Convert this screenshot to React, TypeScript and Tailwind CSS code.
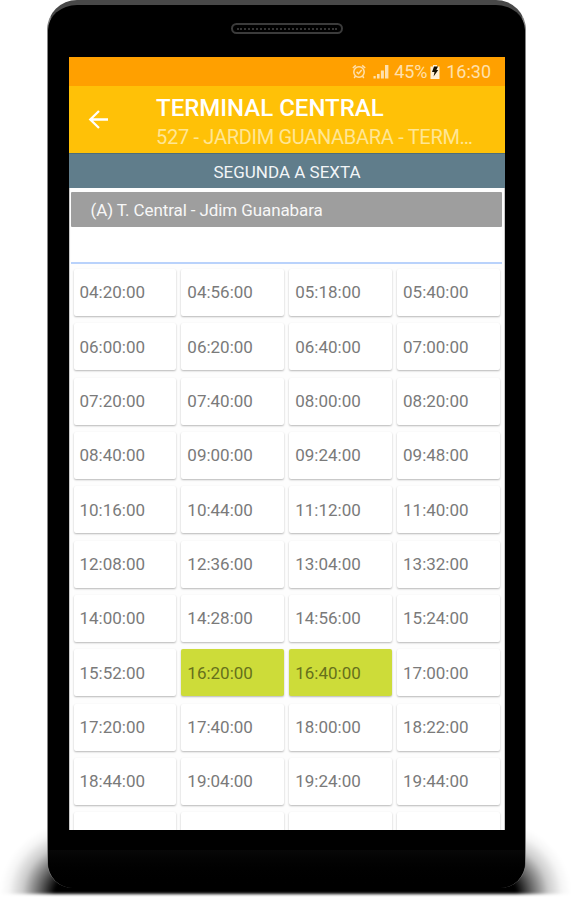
interface Departure {
  time: string;
  next?: boolean;
}

const departures: Departure[] = [
  { time: "04:20:00" },
  { time: "04:56:00" },
  { time: "05:18:00" },
  { time: "05:40:00" },
  { time: "06:00:00" },
  { time: "06:20:00" },
  { time: "06:40:00" },
  { time: "07:00:00" },
  { time: "07:20:00" },
  { time: "07:40:00" },
  { time: "08:00:00" },
  { time: "08:20:00" },
  { time: "08:40:00" },
  { time: "09:00:00" },
  { time: "09:24:00" },
  { time: "09:48:00" },
  { time: "10:16:00" },
  { time: "10:44:00" },
  { time: "11:12:00" },
  { time: "11:40:00" },
  { time: "12:08:00" },
  { time: "12:36:00" },
  { time: "13:04:00" },
  { time: "13:32:00" },
  { time: "14:00:00" },
  { time: "14:28:00" },
  { time: "14:56:00" },
  { time: "15:24:00" },
  { time: "15:52:00" },
  { time: "16:20:00", next: true },
  { time: "16:40:00", next: true },
  { time: "17:00:00" },
  { time: "17:20:00" },
  { time: "17:40:00" },
  { time: "18:00:00" },
  { time: "18:22:00" },
  { time: "18:44:00" },
  { time: "19:04:00" },
  { time: "19:24:00" },
  { time: "19:44:00" },
];

function AlarmIcon() {
  return (
    <svg
      viewBox="0 0 14 16"
      className="h-4 w-3.5"
      fill="none"
      stroke="currentColor"
      strokeWidth="1.5"
      aria-hidden="true"
    >
      <circle cx="7" cy="8" r="5.2" />
      <path d="M.8 4 3.8 1.4M13.2 4l-3-2.6M4.6 7.9l1.9 1.8 3.2-3.6M3.4 12.2 2.2 14M10.6 12.2l1.2 1.8" />
    </svg>
  );
}

function SignalIcon() {
  return (
    <svg viewBox="0 0 16 15" className="h-[15px] w-4" fill="currentColor" aria-hidden="true">
      <path d="M.5 12h2.2v2.5H.5zM4 10h2.6v4.5H4zM7.9 6.5h3v8h-3zM12 1h3.4v13.5H12z" />
    </svg>
  );
}

function BatteryIcon() {
  return (
    <svg viewBox="0 0 10 14" className="h-3.5 w-2.5" aria-hidden="true">
      <path d="M3 0h4v1.5h2.5V14H.5V1.5H3z" fill="#fff0d6" />
      <path d="M4 1.5h4L6.4 5H8.2L3.6 11.5 4.5 7H2z" fill="#171100" />
    </svg>
  );
}

function StatusBar() {
  return (
    <div className="flex h-[29px] shrink-0 items-center justify-end bg-[#ffa000] pr-3.5 text-[18px] text-[#ffe0ad]">
      <AlarmIcon />
      <span className="ml-[7px]">
        <SignalIcon />
      </span>
      <span className="ml-[5px] tracking-[-0.2px]">45%</span>
      <span className="ml-[3px]">
        <BatteryIcon />
      </span>
      <span className="ml-1.5">16:30</span>
    </div>
  );
}

function Toolbar() {
  return (
    <header className="flex h-[67px] shrink-0 bg-[#ffc107] pl-[19px]">
      <button aria-label="Voltar" className="mt-[23px] h-[21px] w-[21px] text-white">
        <svg
          viewBox="0 0 21 21"
          fill="none"
          stroke="currentColor"
          strokeWidth="2.3"
          aria-hidden="true"
        >
          <path d="M20 10.5H2.5M11 2 2.3 10.5 11 19" />
        </svg>
      </button>
      <div className="ml-[47px] pt-2 whitespace-nowrap">
        <h1 className="text-[24px] leading-[28px] font-medium text-white">TERMINAL CENTRAL</h1>
        <p className="text-[20px] leading-[30px] tracking-[-0.3px] text-[#ffe694]">
          527 - JARDIM GUANABARA - TERM…
        </p>
      </div>
    </header>
  );
}

function DepartureCard({ time, next }: Departure) {
  return (
    <div
      className={[
        "flex h-[47px] items-center rounded-[2px] pt-px pl-1.5 text-[17px] shadow-[0_1px_2px_rgba(0,0,0,0.28)]",
        next ? "bg-[#cddc39] text-[#66701c]" : "bg-white text-[#7a7a7a]",
      ].join(" ")}
    >
      {time}
    </div>
  );
}

function Screen() {
  return (
    <main className="ml-[21px] flex h-[773px] w-[436px] flex-col overflow-hidden bg-[#fdfdfd]">
      <StatusBar />
      <Toolbar />
      <div className="flex h-[35px] shrink-0 items-center justify-center border-t border-[#4d6d79] bg-[#607d8b] pt-1 text-[17px] text-[#f2f5f7]">
        SEGUNDA A SEXTA
      </div>
      <section className="flex-1 border-x border-[#c9c9c9] pt-1 pr-0.5 pl-px">
        <div className="flex h-[35px] items-center rounded-[1px] bg-[#9e9e9e] pt-0.5 pl-[19.5px] text-[17px] tracking-[-0.1px] text-[#f7f7f7]">
          (A) T. Central - Jdim Guanabara
        </div>
        <div className="h-[37px] border-b-2 border-[#b9d2fb] bg-white" />
        <div className="mt-[5px] grid grid-cols-4 gap-x-[5.4px] gap-y-[7.35px] pr-[2.5px] pl-[2.5px]">
          {departures.map((departure) => (
            <DepartureCard key={departure.time} {...departure} />
          ))}
          {/* Next row, cut off by the bottom of the screen */}
          {[0, 1, 2, 3].map((column) => (
            <DepartureCard key={column} time="" />
          ))}
        </div>
      </section>
    </main>
  );
}

// Soft shadow the phone casts on the ground, wider than the body on both sides
function GroundShadow() {
  return (
    <div className="absolute inset-x-0 top-[822px] flex h-[72px] justify-between blur-[1.5px]">
      <div className="w-[76px] bg-[radial-gradient(ellipse_100%_100%_at_bottom_right,#000_28%,rgba(0,0,0,0.6)_48%,rgba(0,0,0,0.2)_70%,rgba(0,0,0,0.04)_88%,transparent_100%)]" />
      <div className="mt-14 h-4 flex-1 bg-black" />
      <div className="w-[76px] bg-[radial-gradient(ellipse_100%_100%_at_bottom_left,#000_28%,rgba(0,0,0,0.6)_48%,rgba(0,0,0,0.2)_70%,rgba(0,0,0,0.04)_88%,transparent_100%)]" />
    </div>
  );
}

export default function App() {
  return (
    <div className="relative h-[900px] w-[571px] overflow-hidden bg-white pl-[47px] font-[Roboto,sans-serif]">
      <GroundShadow />
      <div className="relative h-[888px] w-[479px] rounded-t-[30px] rounded-b-[26px] border-x border-t-[5px] border-x-[#858585] border-t-[#484848] bg-black">
        <div className="flex h-[52px] justify-center pt-[18px]">
          <div className="flex h-[11px] w-[112px] items-center rounded-full border-2 border-[#3b3b3b] px-1">
            <div className="w-full border-t-2 border-dotted border-[#343434]" />
          </div>
        </div>
        <Screen />
        <div className="h-5" />
        <div className="h-[38px] rounded-b-[25px] bg-gradient-to-b from-[#080808] to-black" />
      </div>
    </div>
  );
}
